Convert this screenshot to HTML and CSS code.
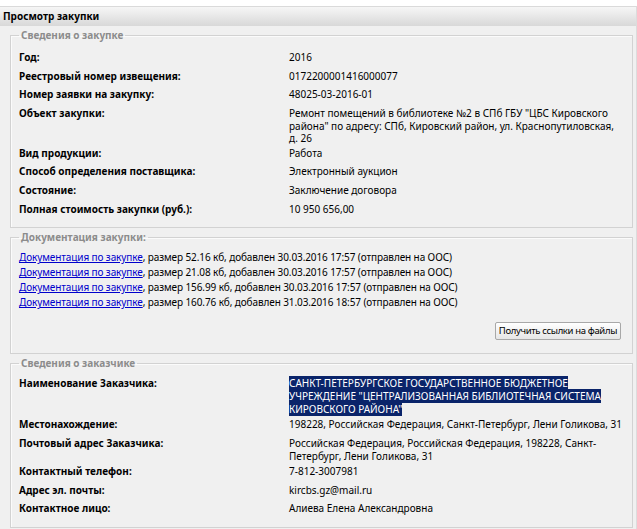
FILE: index.html
```html
<!DOCTYPE html>
<html lang="ru">
<head>
<meta charset="utf-8">
<title>Просмотр закупки</title>
<link rel="stylesheet" href="styles.css">
</head>
<body>
<div class="page">
  <div class="page-title">Просмотр закупки</div>
  <div class="content">
    <fieldset class="box">
      <legend>Сведения о закупке</legend>
      <table class="kv kv-tight">
        <tr><th>Год:</th><td>2016</td></tr>
        <tr><th>Реестровый номер извещения:</th><td>0172200001416000077</td></tr>
        <tr><th>Номер заявки на закупку:</th><td>48025-03-2016-01</td></tr>
        <tr><th>Объект закупки:</th><td>Ремонт помещений в библиотеке №2 в СПб ГБУ "ЦБС Кировского<br>района" по адресу: СПб, Кировский район, ул. Краснопутиловская,<br>д. 26</td></tr>
        <tr><th>Вид продукции:</th><td>Работа</td></tr>
        <tr><th>Способ определения поставщика:</th><td>Электронный аукцион</td></tr>
        <tr><th>Состояние:</th><td>Заключение договора</td></tr>
        <tr><th>Полная стоимость закупки (руб.):</th><td>10 950 656,00</td></tr>
      </table>
    </fieldset>

    <fieldset class="box docs">
      <legend>Документация закупки:</legend>
      <div class="doc-line"><a href="#">Документация по закупке</a>, размер 52.16 кб, добавлен 30.03.2016 17:57 (отправлен на ООС)</div>
      <div class="doc-line"><a href="#">Документация по закупке</a>, размер 21.08 кб, добавлен 30.03.2016 17:57 (отправлен на ООС)</div>
      <div class="doc-line"><a href="#">Документация по закупке</a>, размер 156.99 кб, добавлен 30.03.2016 17:57 (отправлен на ООС)</div>
      <div class="doc-line"><a href="#">Документация по закупке</a>, размер 160.76 кб, добавлен 31.03.2016 18:57 (отправлен на ООС)</div>
      <div class="actions"><button class="btn" type="button">Получить ссылки на файлы</button></div>
    </fieldset>

    <fieldset class="box customer">
      <legend>Сведения о заказчике</legend>
      <table class="kv">
        <tr><th>Наименование Заказчика:</th><td><span class="selected">САНКТ-ПЕТЕРБУРГСКОЕ ГОСУДАРСТВЕННОЕ БЮДЖЕТНОЕ </span><br><span class="selected">УЧРЕЖДЕНИЕ "ЦЕНТРАЛИЗОВАННАЯ БИБЛИОТЕЧНАЯ СИСТЕМА </span><br><span class="selected">КИРОВСКОГО РАЙОНА"</span></td></tr>
        <tr><th>Местонахождение:</th><td>198228, Российская Федерация, Санкт-Петербург, Лени Голикова, 31</td></tr>
        <tr><th>Почтовый адрес Заказчика:</th><td>Российская Федерация, Российская Федерация, 198228, Санкт-<br>Петербург, Лени Голикова, 31</td></tr>
        <tr><th>Контактный телефон:</th><td>7-812-3007981</td></tr>
        <tr><th>Адрес эл. почты:</th><td>kircbs.gz@mail.ru</td></tr>
        <tr><th>Контактное лицо:</th><td>Алиева Елена Александровна</td></tr>
      </table>
    </fieldset>
  </div>
</div>
</body>
</html>
```

FILE: styles.css
```css
html, body {
  margin: 0;
  padding: 0;
  background: #ffffff;
}

body {
  font-family: "Noto Sans", "DejaVu Sans", sans-serif;
  font-size: 10px;
  line-height: 13px;
  color: #000;
}

.page {
  margin-top: 6px;
  background: #f0f0f0;
  border-top: 1px solid #dadada;
  border-right: 1px solid #dcdcdc;
  min-height: 522px;
}

.page-title {
  height: 19px;
  line-height: 18px;
  padding-left: 3px;
  font-weight: bold;
  background: linear-gradient(#f6f6f6, #d8d8d8);
}

.content {
  padding: 3px 3px 0 10px;
}

.box {
  margin: 0 0 3px;
  padding: 8px 8px 7px 8px;
  border: 1px solid #d2d2d2;
  box-shadow: inset 1px 1px 0 #fbfbfb;
  min-width: 0;
}

.box legend {
  padding: 0 2px;
  color: #8c8c8c;
  font-weight: bold;
  line-height: 13px;
}

.kv {
  border-collapse: collapse;
  width: 100%;
}

.kv tr {
  height: 18.7px;
}

.kv th,
.kv td {
  padding: 1px 0;
  vertical-align: top;
  text-align: left;
  line-height: 13px;
  white-space: nowrap;
}

.kv-tight th,
.kv-tight td {
  line-height: 12.5px;
}

.kv th {
  width: 270px;
  font-weight: bold;
}

.selected {
  background: #0a246a;
  color: #fff;
}

.docs {
  padding-top: 7px;
  padding-bottom: 13px;
}

.customer {
  padding-top: 6px;
}

.doc-line {
  line-height: 13px;
  margin-bottom: 2px;
  white-space: nowrap;
  letter-spacing: -0.1px;
}

.doc-line a {
  color: #0000cc;
  text-decoration: underline;
}

.actions {
  display: flex;
  justify-content: flex-end;
  margin-top: 13px;
  padding-right: 3px;
}

.btn {
  font-family: "Noto Sans", "DejaVu Sans", sans-serif;
  font-size: 9.5px;
  line-height: 13px;
  letter-spacing: -0.35px;
  padding: 1px 3px 2px;
  border: 1px solid #a8a8a8;
  border-radius: 2px;
  background: linear-gradient(#ffffff, #e6e6e6);
  color: #000;
}
```
